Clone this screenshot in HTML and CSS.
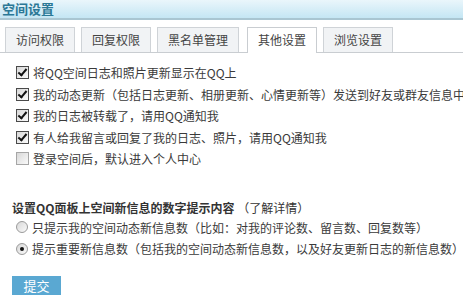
FILE: index.html
```html
<!DOCTYPE html>
<html lang="zh-CN">
<head>
  <meta charset="UTF-8" />
  <title>空间设置</title>
  <link rel="stylesheet" href="styles.css">
</head>
<body>

  <div class="title-bar">空间设置</div>

  <ul class="tabs">
    <li>访问权限</li>
    <li>回复权限</li>
    <li>黑名单管理</li>
    <li class="active">其他设置</li>
    <li>浏览设置</li>
  </ul>

  <div class="options">
    <label><input type="checkbox" checked> 将QQ空间日志和照片更新显示在QQ上</label>
    <label><input type="checkbox" checked> 我的动态更新（包括日志更新、相册更新、心情更新等）发送到好友或群友信息中</label>
    <label><input type="checkbox" checked> 我的日志被转载了，请用QQ通知我</label>
    <label><input type="checkbox" checked> 有人给我留言或回复了我的日志、照片，请用QQ通知我</label>
    <label><input type="checkbox"> 登录空间后，默认进入个人中心</label>
  </div>

  <div class="notice">
    <h3>设置QQ面板上空间新信息的数字提示内容 <span>（了解详情）</span></h3>
    <label><input type="radio" name="tip"> 只提示我的空间动态新信息数（比如：对我的评论数、留言数、回复数等）</label>
    <label><input type="radio" name="tip" checked> 提示重要新信息数（包括我的空间动态新信息数，以及好友更新日志的新信息数）</label>
  </div>

  <button class="submit">提交</button>

</body>
</html>
```

FILE: styles.css
```css
body {
  margin: 0;
  width: 463px;
  height: 305px;
  overflow: hidden;
  background: #fff;
  color: #333;
  font-family: "Noto Sans CJK SC", "Liberation Sans", sans-serif;
  font-size: 12px;
}
.title-bar {
  height: 18px;
  line-height: 18px;
  padding-left: 2px;
  background: linear-gradient(#eaf6fb, #c4e6f4);
  border-bottom: 2px solid #a9c6d2;
  color: #2b7896;
  font-size: 13px;
  font-weight: bold;
  white-space: nowrap;
}
.tabs {
  display: flex;
  list-style: none;
  margin: 7px 0 0 0;
  padding: 0 0 0 5px;
  border-bottom: 1px solid #c9cdd1;
  height: 25px;
}
.tabs li {
  margin-right: 6px;
  padding: 0 10px;
  height: 24px;
  line-height: 24px;
  background: #f1f3f5;
  border: 1px solid #cfd3d7;
  border-bottom: none;
  color: #444;
  white-space: nowrap;
}
.tabs li:nth-child(3) { margin-right: 8px; }
.tabs li.active {
  background: #fff;
  height: 25px;
  border-color: #c9cdd1;
}
.options {
  display: flex;
  flex-direction: column;
  padding: 9px 0 0 16px;
}
label {
  display: flex;
  align-items: center;
  height: 21.5px;
  white-space: nowrap;
  color: #3a3a3a;
}
input {
  appearance: none;
  position: relative;
  flex: none;
  width: 13px;
  height: 13px;
  margin: 0 4px 0 0;
  background: linear-gradient(135deg, #d8d8d8, #fafafa);
}
input[type="checkbox"] {
  border: 1px solid #a6a6a6;
}
input[type="checkbox"]:checked {
  border-color: #4a4a4a;
}
input[type="checkbox"]:checked::after {
  content: "";
  position: absolute;
  left: 3px;
  top: 0px;
  width: 3px;
  height: 7px;
  border: solid #111;
  border-width: 0 2px 2px 0;
  transform: rotate(40deg);
}
input[type="radio"] {
  width: 12px;
  height: 12px;
  border: 1px solid #9a9a9a;
  border-radius: 50%;
}
input[type="radio"]:checked::after {
  content: "";
  position: absolute;
  left: 3px;
  top: 3px;
  width: 4px;
  height: 4px;
  border-radius: 50%;
  background: #111;
}
.notice {
  margin-top: 29px;
  padding-left: 12px;
}
.notice h3 {
  margin: 0;
  height: 18px;
  line-height: 18px;
  font-size: 12px;
  color: #333;
  white-space: nowrap;
}
.notice h3 span { font-weight: normal; }
.notice label { padding-left: 4px; }
.submit {
  margin: 16px 0 0 12px;
  width: 49px;
  height: 19px;
  padding: 0;
  border: none;
  background: #5aa8d2;
  color: #fff;
  font-family: inherit;
  font-size: 13px;
  line-height: 19px;
}
```
